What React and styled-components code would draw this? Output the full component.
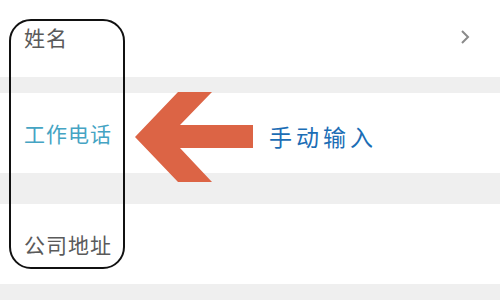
import React from "react"
import styled, { createGlobalStyle } from "styled-components"

const GlobalStyle = createGlobalStyle`
    html, body {
        margin: 0;
        padding: 0;
        background: #efefef;
        font-family: "Noto Sans CJK SC", "Noto Sans", sans-serif;
    }
`

const rows = [
    { label: "姓名", arrow: true },
    { label: "工作电话", active: true },
    { label: "公司地址" },
]

function Chevron() {
    return (
        <svg width="10" height="16" viewBox="0 0 10 16">
            <path d="M2 2 L8 8 L2 14" fill="none" stroke="#8a8a8a" strokeWidth="2" />
        </svg>
    )
}

function Annotation() {
    return (
        <Overlay>
            <Outline />
            <Arrow width="500" height="300" viewBox="0 0 500 300">
                <polygon
                    points="135,137 178,92 212,92 180,125 253,125 253,148 180,148 212,182 178,182"
                    fill="#dc6445"
                />
            </Arrow>
            <Note>手动输入</Note>
        </Overlay>
    )
}

export default function App() {
    return (
        <Page>
            <GlobalStyle />
            <List>
                {rows.map(row => (
                    <Row key={row.label}>
                        <Label $active={row.active}>{row.label}</Label>
                        {row.arrow && <Chevron />}
                    </Row>
                ))}
            </List>
            <Annotation />
        </Page>
    )
}

const Page = styled.div`
    position: relative;
    width: 500px;
    height: 300px;
    overflow: hidden;
    background: #efefef;
`

const List = styled.div`
    display: flex;
    flex-direction: column;
    margin-top: -3px;
    gap: 16px;

    > div:nth-child(2) {
        margin-bottom: 15px;
    }
`

const Row = styled.div`
    display: flex;
    align-items: center;
    justify-content: space-between;
    height: 80px;
    padding: 0 30px 0 24px;
    background: #ffffff;
`

const Label = styled.span`
    font-size: 21px;
    letter-spacing: 1px;
    color: ${p => (p.$active ? "#45a4c3" : "#5a5a5a")};
`

const Overlay = styled.div`
    position: absolute;
    inset: 0;
    pointer-events: none;
`

const Outline = styled.div`
    position: absolute;
    left: 9px;
    top: 19px;
    width: 112px;
    height: 246px;
    border: 2px solid #111;
    border-radius: 22px;
`

const Arrow = styled.svg`
    position: absolute;
    left: 0;
    top: 0;
`

const Note = styled.div`
    position: absolute;
    left: 269px;
    top: 119px;
    font-size: 23px;
    letter-spacing: 4px;
    color: #1b6db5;
`
